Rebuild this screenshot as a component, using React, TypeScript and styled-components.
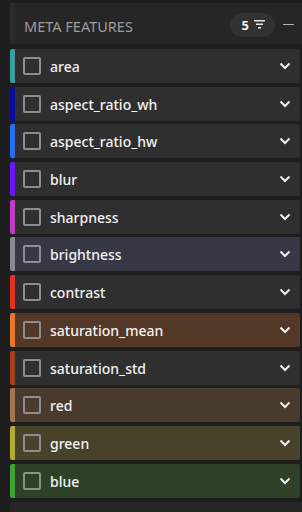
import React from "react";
import styled, { createGlobalStyle } from "styled-components";

const GlobalStyle = createGlobalStyle`
  html, body {
    margin: 0;
    padding: 0;
    background: #1e1e1e;
  }
  body {
    font-family: "Noto Sans", "Open Sans", sans-serif;
  }
`;

const Page = styled.div`
  width: 302px;
  height: 512px;
  overflow: hidden;
  padding: 3px 0 0 10px;
  box-sizing: border-box;
  display: flex;
  flex-direction: column;
`;

const Header = styled.div`
  height: 41px;
  box-sizing: border-box;
  display: flex;
  align-items: center;
  background: #262626;
  border-left: 5px solid #2c2c2c;
  padding: 2px 8px 0 9px;
  margin-bottom: 5px;
`;

const Title = styled.div`
  flex: 1;
  color: #9c9c9c;
  font-size: 14.5px;
  padding-top: 2px;
`;

const Badge = styled.div`
  display: flex;
  align-items: center;
  gap: 5px;
  height: 24px;
  padding: 0 10px 0 12px;
  border-radius: 12px;
  background: #323232;
  color: #f0f0f0;
  font-size: 13px;
  font-weight: 700;
  margin-right: 8px;
`;

const Dash = styled.div`
  width: 11px;
  height: 1.5px;
  background: #b0b0b0;
`;

const List = styled.div`
  display: flex;
  flex-direction: column;
  gap: 3.7px;
  padding-right: 2px;
`;

const Row = styled.div<{ $bar: string; $bg: string }>`
  height: 34px;
  display: flex;
  align-items: center;
  border-left: 5px solid ${({ $bar }) => $bar};
  background: ${({ $bg }) => $bg};
  border-radius: 2px;
  padding: 0 9px 0 8px;
  flex-shrink: 0;
`;

const Check = styled.div`
  width: 18px;
  height: 18px;
  box-sizing: border-box;
  border: 2px solid #8e8e8e;
  border-radius: 2px;
  margin-right: 9px;
`;

const Label = styled.div`
  flex: 1;
  color: #f2f2f2;
  font-size: 14px;
  font-weight: 500;
  padding-top: 1px;
`;

const Footer = styled.div`
  flex: 1;
  margin-top: 4px;
  background: #262626;
`;

const FilterIcon = () => (
  <svg width="11" height="9" viewBox="0 0 11 9">
    <rect x="0" y="0" width="11" height="1.5" fill="#e8e8e8" />
    <rect x="2" y="3.5" width="7" height="1.5" fill="#e8e8e8" />
    <rect x="4" y="7" width="3" height="1.5" fill="#e8e8e8" />
  </svg>
);

const Chevron = () => (
  <svg width="12" height="8" viewBox="0 0 12 8">
    <path d="M1.5 1.5 L6 6 L10.5 1.5" stroke="#f0f0f0" strokeWidth="2" fill="none" />
  </svg>
);

const features = [
  { name: "area", bar: "#3a9e9e", bg: "#2f2f2f" },
  { name: "aspect_ratio_wh", bar: "#0a0a9c", bg: "#2f2f2f" },
  { name: "aspect_ratio_hw", bar: "#2a6cf2", bg: "#2f2f2f" },
  { name: "blur", bar: "#6818f0", bg: "#2f2f2f" },
  { name: "sharpness", bar: "#c03cc4", bg: "#2f2f2f" },
  { name: "brightness", bar: "#8a8a92", bg: "#373845" },
  { name: "contrast", bar: "#e0301e", bg: "#2f2f2f" },
  { name: "saturation_mean", bar: "#e8782a", bg: "#533727" },
  { name: "saturation_std", bar: "#a3401c", bg: "#303030" },
  { name: "red", bar: "#a2744a", bg: "#483a2c" },
  { name: "green", bar: "#b2aa34", bg: "#49422a" },
  { name: "blue", bar: "#3ea234", bg: "#2e4228" },
];

export default function App() {
  return (
    <>
      <GlobalStyle />
      <Page>
        <Header>
          <Title>META FEATURES</Title>
          <Badge>
            5
            <FilterIcon />
          </Badge>
          <Dash />
        </Header>
        <List>
          {features.map((f) => (
            <Row key={f.name} $bar={f.bar} $bg={f.bg}>
              <Check />
              <Label>{f.name}</Label>
              <Chevron />
            </Row>
          ))}
        </List>
        <Footer />
      </Page>
    </>
  );
}
